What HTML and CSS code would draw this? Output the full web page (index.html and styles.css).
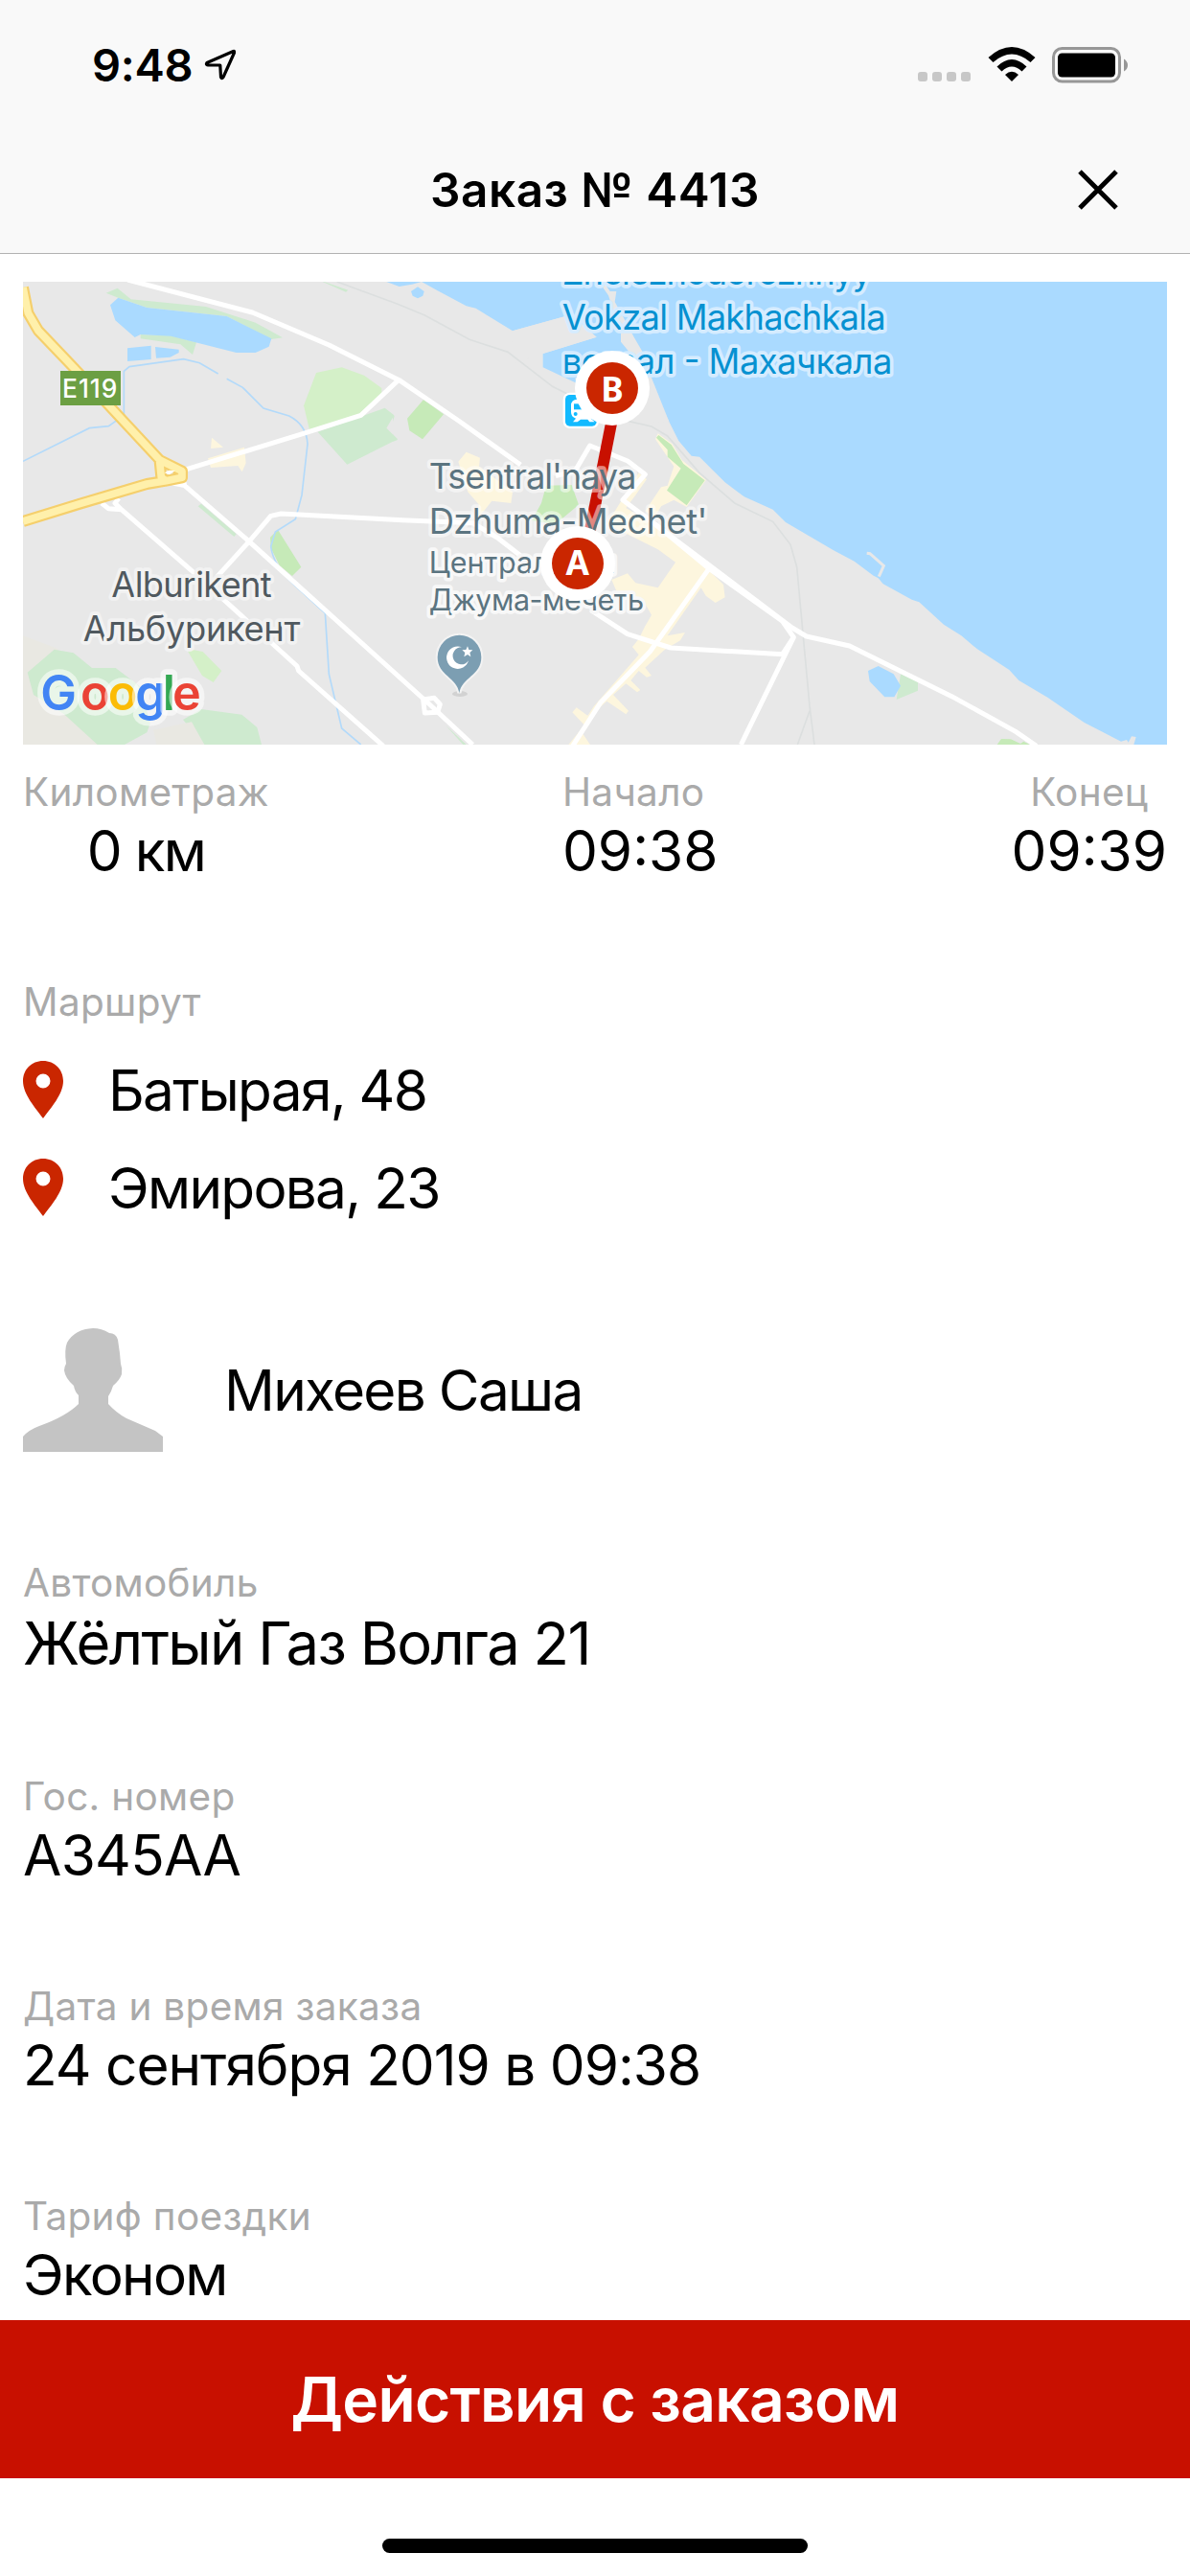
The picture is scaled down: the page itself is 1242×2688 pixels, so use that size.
FILE: index.html
```
<!DOCTYPE html>
<html lang="ru">
<head>
  <meta charset="UTF-8" />
  <title>Заказ № 4413</title>
  <link rel="stylesheet" href="styles.css">
</head>
<body>

<!-- Header -->
<header class="header">
  <div class="status-bar">
    <div class="status-left">
      <span class="time">9:48</span>
      <svg class="location" viewBox="0 0 33 33" width="33" height="33"><path d="M30.500 2.500 L3 14.500 Q1.500 16.500 4 16.800 L16.800 17 L17.500 29.500 Q18.500 32 20 29.500 L31.500 4 Q32 2 30.500 2.500 Z" fill="none" stroke="#000" stroke-width="3.200" stroke-linejoin="round"/></svg>
    </div>
    <div class="status-right">
      <div class="signal"><i></i><i></i><i></i><i></i></div>
      <svg class="wifi" viewBox="0 0 50 37" width="50" height="37">
        <path d="M0.500 11 Q25 -11 49.500 11 L44.500 16 Q25 -1 5.500 16 Z"/>
        <path d="M9.500 20.500 Q25 5.500 40.500 20.500 L35.500 25.500 Q25 15.500 14.500 25.500 Z"/>
        <path d="M18 29 Q25 22.500 32 29 L25 36 Z"/>
      </svg>
      <svg class="battery" viewBox="0 0 80 38" width="80" height="38">
        <rect x="1.500" y="1.500" width="69" height="34.500" rx="9" fill="none" stroke="#979797" stroke-width="3"/>
        <rect x="6" y="6.500" width="60" height="25" rx="4.500"/>
        <path d="M75 12.500 Q79 15 79 19 Q79 23 75 25.500 Z" fill="#979797"/>
      </svg>
    </div>
  </div>
  <div class="nav-bar">
    <h1>Заказ № 4413</h1>
    <svg class="close" viewBox="0 0 42 42" width="42" height="42"><path d="M2 2 L40 40 M40 2 L2 40" stroke="#000" stroke-width="5"/></svg>
  </div>
</header>

<main class="content">
  <!-- Map -->
  <svg class="map" viewBox="72 42 3582 1449" preserveAspectRatio="none">
    <rect x="72" y="42" width="3582" height="1449" fill="#e8e8e8"/>
    <path class="beige" d="M72 1150 L180 1190 L330 1491 H72 Z"/>

    <!-- sea -->
    <path class="water" d="M1210 42 L1250 57 L1290 50 L1320 42 L1370 70 L1460 118 L1490 125 L1605 196 L1770 150 L1868 215 L1700 267 L1700 310 L1800 357 L1900 400 L2060 400 L2080 450 L2125 540 L2165 587 L2190 590 L2270 670 L2330 715 L2420 755 L2460 795 L2610 883 L2675 917 L2735 962 L2750 970 L2765 988 L2855 1037 L2878 1045 L2955 1115 L3010 1150 L3060 1192 L3160 1257 L3190 1290 L3280 1343 L3395 1422 L3510 1481 L3528 1476 L3533 1484 L3543 1465 L3557 1467 L3550 1491 H3654 V42 Z"/>
    <path class="land" d="M1880 42 L1886 58 L1905 85 L1920 130 L1944 190 L1944 230 L1970 262 L1800 345 L1900 490 L2095 480 L2035 330 L2012 262 L1985 215 L1950 150 L1925 105 L1930 72 L1910 72 L1890 42 Z"/>
    <path class="land" d="M1605 196 L1790 145 L1868 215 L1700 267 L1600 300 Z"/>
    <path d="M2714 892 L2724 893 L2767 931 L2752 965" fill="none" stroke="#e8e8e8" stroke-width="9"/>
    <path class="water" d="M1287 72 L1308 58 L1328 72 L1324 86 L1308 94 L1292 86 Z"/>

    <!-- parks -->
    <path class="park" d="M332 77 L368 62 L410 97 L645 120 L800 170 L885 217 L850 222 L710 150 L460 123 L370 92 Z"/>
    <path class="park" d="M440 207 L535 210 L615 232 L603 270 L565 238 L440 220 Z"/>
    <path class="park" d="M1015 42 L1090 68 L1083 74 L1010 42 Z"/>
    <path class="park" d="M995 512 L1205 437 L1234 460 L1210 500 L1245 535 L1087 614 Z"/>
    <path class="park" d="M620 745 L630 737 L740 832 L733 840 Z"/>
    <path class="park" d="M86 1265 L170 1193 L230 1204 L288 1251 H362 L440 1310 L470 1425 L460 1453 L390 1491 H305 L200 1395 L105 1335 Z"/>
    <path class="park" d="M573 1413 L630 1380 L757 1397 L805 1437 L819 1491 H640 Z"/>
    <path class="park" d="M2820 1270 L2874 1295 V1322 L2807 1350 Z"/>
    <path class="park" d="M1230 460 L1235 462 L1230 480 Z M1230 520 L1245 537 L1230 542 Z M1395 1430 L1460 1491 H1450 Z"/>
    <path class="lawn" d="M990 327 L1070 310 L1140 335 L1195 375 V392 L1130 460 L970 510 L951 430 Z"/>
    <path class="lawn" d="M583 1190 L635 1200 L694 1260 L668 1296 L633 1275 Z"/>
    <path class="grass" d="M846 842 L870 818 L943 935 L915 963 L875 930 L848 875 Z"/>
    <path class="grass" d="M1275 470 L1326 411 L1389 457 L1323 535 L1282 508 Z"/>
    <path class="grass" d="M1710 680 L1790 678 L1812 740 L1740 800 L1665 790 L1695 735 Z"/>
    <path class="grass" d="M3122 1491 L3135 1473 L3165 1474 L3195 1488 L3205 1481 L3225 1491 Z"/>

    <!-- built-up areas -->
    <path class="beige" d="M480 1445 L600 1420 L640 1491 H490 Z"/>
    <path class="area" d="M663 530 L699 560 L660 564 Z M651 595 L765 560 L770 610 L758 637 L745 618 L660 624 Z"/>
    <path class="area" d="M1435 605 L1460 575 L1503 593 L1500 620 L1605 700 L1600 735 L1540 728 L1515 760 L1485 790 L1500 740 L1465 700 Z"/>
    <path class="area" d="M2000 640 L2025 660 L1990 710 L1960 750 L2040 800 L2170 895 L2220 945 L2265 990 L2270 1030 L2240 1047 L2210 1025 L2195 1000 L2090 1150 L2145 1140 L2130 1165 L2080 1195 L2020 1250 L2040 1275 L2025 1280 L2000 1260 L1975 1290 L2005 1320 L1995 1327 L1960 1300 L1920 1335 L1968 1385 L1960 1396 L1900 1355 L1850 1400 L1820 1450 L1848 1491 H1780 L1830 1430 L1792 1390 L1805 1375 L1840 1400 L1860 1370 L2000 1210 L1980 1185 L2000 1160 L2020 1120 L2040 1085 L2020 1050 L1930 1010 L1915 975 L1965 955 L1990 985 L2060 1000 L2115 920 L2060 880 L1900 800 Z"/>
    <path class="area" d="M2052 535 L2060 517 L2105 550 L2135 600 L2211 662 L2150 747 L2110 725 L2070 745 L2050 780 L2020 760 L2070 685 L2090 680 L2110 620 Z"/>
    <path class="grass" d="M2055 530 L2062 522 L2102 552 L2140 612 L2207 664 L2150 742 L2088 695 L2132 626 L2090 590 L2090 568 Z"/>

    <!-- lakes and rivers -->
    <path class="water" d="M345 115 L370 92 L460 123 L710 150 L850 220 L842 245 L800 264 H740 L535 212 L440 207 L422 216 L361 163 Z"/>
    <path class="water" d="M399 250 L473 242 V285 L399 291 Z M486 246 L560 254 V264 L533 278 L489 281 Z"/>
    <path class="water" d="M2718 1260 L2750 1245 L2798 1270 L2820 1307 L2800 1342 H2770 L2723 1293 Z"/>
    <path class="river" d="M72 604 L280 500 L340 494 L388 460 V322 L405 308 L575 284 L625 296 L683 330 M710 346 L760 373 L825 438 L905 462 Q960 490 963 550 L945 710 L925 785 L862 825 L848 870 Q855 930 920 990 L1018 1080 L1030 1270 L1070 1440 L1130 1491"/>

    <!-- railway -->
    <path class="rail" d="M1055 42 L1245 112 L1330 147 L1470 223 L1590 262 L1730 370 L1930 470 L2040 495 L2090 525 L2190 640 L2300 735 L2420 793 L2475 865 L2495 935 L2535 1370 L2550 1491 M2535 1385 L2497 1491"/>

    <!-- streets -->
    <path class="road" d="M400 36 L790 138 L1030 240 L1250 350 L1440 480 L1630 615 M565 635 L950 517 L1130 460 L1245 352"/>
    <path class="road" d="M540 672 L578 680 L780 855 L1345 1365 L1480 1491 M578 680 L570 645 M780 855 L848 775 L880 768 L1260 788 L1480 797 L1560 845 L1650 915"/>
    <path class="road" d="M318 735 L340 752 L380 755 L610 955 L930 1245 L935 1260 L1200 1495 M380 755 L360 735 L372 720 M780 855 L680 965"/>
    <path class="road" d="M1740 650 L1800 635 L1847 555 L1965 603 L2020 645 L1950 725 L2480 1125 L2525 1152 L2660 1182 L2980 1340 L3180 1450 L3245 1495 M1850 1070 L1965 1145 L2100 1188 L2450 1208 L2485 1155"/>
    <path class="road" d="M2050 800 L2220 940 L2450 1105 L2485 1155 L2320 1491 M2220 940 L2035 1200 L1880 1360 L1790 1500"/>
    <path class="road" d="M1325 1350 L1360 1345 L1378 1365 L1370 1390 L1330 1392 Z"/>

    <!-- highway -->
    <path class="highway-edge" d="M72 60 L88 140 L120 195 L230 310 L500 600 L570 635 L570 655 L520 665 L505 655 L500 605 M520 665 L460 675 L250 737 L72 792"/>
    <path class="highway" d="M72 60 L88 140 L120 195 L230 310 L500 600 L570 635 L570 655 L520 665 L505 655 L500 605 M520 665 L460 675 L250 737 L72 792"/>
    <path d="M515 640 L530 632 L548 634 L530 646 Z" fill="#fff"/>
    <rect x="189" y="321" width="189" height="108" fill="#6c9f43"/>
    <text class="shield" x="195" y="404" textLength="172">E119</text>

    <!-- captions -->
    <g class="caption town">
      <text x="349" y="1028" textLength="502">Alburikent</text>
      <text x="260" y="1167" textLength="680">Альбурикент</text>
    </g>
    <g class="caption station">
      <text x="1760" y="50" textLength="970">Zheleznodorozhnyy</text>
      <text x="1760" y="192" textLength="1014">Vokzal Makhachkala</text>
      <text x="1760" y="330" textLength="1034">вокзал - Махачкала</text>
    </g>

    <!-- route -->
    <path d="M1915 480 L1840 860" stroke="#c81000" stroke-width="36"/>
    <g class="caption mosque">
      <text x="1343" y="690" textLength="650">Tsentral'naya</text>
      <text x="1343" y="831" textLength="872">Dzhuma-Mechet'</text>
      <text class="small" x="1343" y="953" textLength="585">Центральная</text>
      <text class="small" x="1343" y="1070" textLength="673">Джума-мечеть</text>
    </g>
    <ellipse cx="1440" cy="1332" rx="24" ry="9" fill="#d2d2d2"/>
    <path d="M1438 1330 C1432 1280 1370 1275 1370 1217 A68 68 0 0 1 1507 1217 C1507 1275 1445 1280 1438 1330 Z" fill="#7c9eb2" stroke="#f3f3f3" stroke-width="12" paint-order="stroke"/>
    <path d="M1446 1186 A35 35 0 1 0 1467 1228 A27 27 0 1 1 1446 1186 Z" fill="#fff"/>
    <path d="M1464 1183 L1468 1194 L1480 1195 L1471 1203 L1474 1216 L1464 1209 L1453 1216 L1456 1203 L1447 1195 L1459 1194 Z" fill="#fff"/>

    <rect x="1770" y="396" width="98" height="98" rx="14" fill="#12baff" stroke="#fff" stroke-width="14" paint-order="stroke"/>
    <path d="M1808 410 H1860 V462 L1850 470 L1862 481 H1846 L1840 473 H1818 L1808 481 H1794 L1803 470 Q1788 465 1788 450 V430 Q1788 410 1808 410 Z" fill="#fff"/>
    <path d="M1797 424 H1845 V442 H1797 Z" fill="#12baff"/>
    <circle cx="1802" cy="456" r="6" fill="#12baff"/>

    <g class="pin">
      <circle cx="1917" cy="375" r="117" fill="#fff"/>
      <circle cx="1917" cy="375" r="81" fill="#ca2600"/>
      <text x="1917" y="417">B</text>
      <circle cx="1809" cy="924" r="117" fill="#fff"/>
      <circle cx="1809" cy="924" r="81" fill="#ca2600"/>
      <text x="1808" y="961">A</text>
    </g>

    <g class="google" aria-label="Google">
      <text x="127 252 338 424 509 540" y="1383"><tspan fill="#4285f4">G</tspan><tspan fill="#ea4335">o</tspan><tspan fill="#fbbc05">o</tspan><tspan fill="#4285f4">g</tspan><tspan fill="#34a853">l</tspan><tspan fill="#ea4335">e</tspan></text>
    </g>
  </svg>

  <!-- Trip summary -->
  <section class="summary">
    <div class="stat">
      <div class="label">Километраж</div>
      <div class="value">0 км</div>
    </div>
    <div class="stat">
      <div class="label start">Начало</div>
      <div class="value clock">09:38</div>
    </div>
    <div class="stat">
      <div class="label">Конец</div>
      <div class="value clock">09:39</div>
    </div>
  </section>

  <!-- Route -->
  <section class="route">
    <div class="label">Маршрут</div>
    <div class="stop">
      <svg viewBox="0 0 42 60" width="42" height="60"><path fill-rule="evenodd" d="M21 0 C9 0 0 9 0 21 C0 35 13 49 21 60 C29 49 42 35 42 21 C42 9 33 0 21 0 Z M21 13.500 A7.500 7.500 0 1 1 21 28.500 A7.500 7.500 0 1 1 21 13.500 Z" fill="#ca2600"/></svg>
      <span class="value">Батырая, 48</span>
    </div>
    <div class="stop">
      <svg viewBox="0 0 42 60" width="42" height="60"><path fill-rule="evenodd" d="M21 0 C9 0 0 9 0 21 C0 35 13 49 21 60 C29 49 42 35 42 21 C42 9 33 0 21 0 Z M21 13.500 A7.500 7.500 0 1 1 21 28.500 A7.500 7.500 0 1 1 21 13.500 Z" fill="#ca2600"/></svg>
      <span class="value">Эмирова, 23</span>
    </div>
  </section>

  <!-- Driver -->
  <section class="driver">
    <svg viewBox="0 0 146 129" width="146" height="129"><path d="M0 129 V113 Q6 106 17 102 Q45 92 58 79 V70 Q54 66 53 60 Q44 52 43 44 Q43 40 45 37 Q43 22 46 15 Q54 1 73 0 Q82 0 90 5 Q97 5 99 12 L101 26 L102 37 Q104 42 103 48 Q101 54 94 60 Q92 67 89 71 V79 Q97 88 108 94 L138 107 L146 113 V129 Z" fill="#c4c4c4"/></svg>
    <span class="value">Михеев Саша</span>
  </section>

  <!-- Order details -->
  <section class="details">
    <div class="field car">
      <div class="label">Автомобиль</div>
      <div class="value">Жёлтый Газ Волга 21</div>
    </div>
    <div class="field">
      <div class="label">Гос. номер</div>
      <div class="value plate">А345АА</div>
    </div>
    <div class="field">
      <div class="label">Дата и время заказа</div>
      <div class="value date">24 сентября 2019 в 09:38</div>
    </div>
    <div class="field">
      <div class="label">Тариф поездки</div>
      <div class="value">Эконом</div>
    </div>
  </section>
</main>

<button class="action">Действия с заказом</button>
<div class="home-area"><div class="home-indicator"></div></div>

</body>
</html>
```

FILE: styles.css
```
* { box-sizing: border-box; }
body {
  margin: 0;
  width: 1242px;
  height: 2688px;
  display: flex;
  flex-direction: column;
  background: #fff;
  color: #000;
  font-family: Inter, "Liberation Sans", sans-serif;
  overflow: hidden;
}
svg { display: block; flex: none; }

/* Header */
.header {
  height: 265px;
  flex: none;
  background: #f9f9f9;
  border-bottom: 1px solid #b2b2b2;
}
.status-bar {
  height: 132px;
  padding: 0 64px 0 96px;
  display: flex;
  justify-content: space-between;
}
.status-left {
  display: flex;
  align-items: flex-start;
  gap: 12px;
}
.time {
  margin-top: 38px;
  font-size: 47px;
  line-height: 60px;
  font-weight: 600;
  letter-spacing: -0.3px;
}
.location { margin-top: 51px; }
.status-right {
  display: flex;
  align-items: flex-start;
  padding-top: 49px;
}
.signal {
  display: flex;
  gap: 5px;
  margin: 26px 18px 0 0;
}
.signal i {
  width: 10px;
  height: 10px;
  border-radius: 3px;
  background: #c7c7c7;
}
.wifi { margin-right: 17px; }

.nav-bar {
  height: 132px;
  padding: 0 75px;
  display: grid;
  grid-template-columns: 1fr auto 1fr;
  align-items: center;
}
.nav-bar h1 {
  grid-column: 2;
  margin: 0;
  font-size: 49.5px;
  line-height: 60px;
  font-weight: 600;
  letter-spacing: 0.5px;
}
.close { justify-self: end; }

/* Content */
.content {
  height: 2156px;
  flex: none;
  padding: 29px 24px 0;
  overflow: hidden;
}
.label {
  font-size: 40.5px;
  line-height: 51px;
  letter-spacing: 0.3px;
  color: #aaa;
}
.value {
  font-size: 58.5px;
  line-height: 71px;
  letter-spacing: -1.7px;
  white-space: nowrap;
}
.value.clock { letter-spacing: 0; }
.value.plate { letter-spacing: -0.7px; }
.value.date { letter-spacing: -1px; }

/* Map */
.map {
  width: 1194px;
  height: 483px;
}
.map .water { fill: #aadaff; }
.map .land { fill: #e8e8e8; }
.map .beige { fill: #e9e8e2; }
.map .park { fill: #ceeacf; }
.map .lawn { fill: #d4f0c8; }
.map .grass { fill: #c6eab8; }
.map .area { fill: #fdf6de; }
.river { fill: none; stroke: #b3dafa; stroke-width: 5; }
.rail { fill: none; stroke: #dcdfdf; stroke-width: 5; }
.road { fill: none; stroke: #fff; stroke-width: 15; stroke-linejoin: round; }
.highway-edge { fill: none; stroke: #f5cf6c; stroke-width: 36; stroke-linejoin: round; }
.highway { fill: none; stroke: #fff0ab; stroke-width: 23; stroke-linejoin: round; }
.shield { font-size: 79px; font-weight: 500; fill: #fff; }
.caption {
  font-size: 109px;
  stroke-width: 22px;
  stroke-linejoin: round;
  paint-order: stroke;
}
.town { fill: #50595f; stroke: #f2f2f2; }
.station { fill: #0691d1; stroke: #d5ecff; }
.mosque { fill: #5b7480; stroke: rgba(255, 255, 255, 0.5); }
.caption .small { font-size: 92px; stroke: #f8f8f8; }
.pin text {
  font: bold 106px "Noto Sans", sans-serif;
  fill: #fff;
  text-anchor: middle;
}
.google text {
  font: 600 151px Inter, sans-serif;
  stroke: rgba(255, 255, 255, 0.55);
  stroke-width: 34px;
  stroke-linejoin: round;
  paint-order: stroke;
}

/* Trip summary */
.summary {
  display: flex;
  justify-content: space-between;
  margin-top: 24px;
}
.stat { text-align: center; }
.stat .start { text-align: left; }

/* Route */
.route { margin-top: 97px; }
.route .label { margin-bottom: 15px; }
.stop {
  height: 102px;
  display: flex;
  align-items: center;
  gap: 47px;
}

/* Driver */
.driver {
  display: flex;
  align-items: center;
  gap: 64px;
  margin: 96px 0 111px;
}

/* Order details */
.details {
  display: flex;
  flex-direction: column;
  gap: 97px;
}
.car .value {
  font-size: 61.5px;
  line-height: 75px;
}

/* Bottom */
.action {
  height: 165px;
  flex: none;
  padding: 0;
  border: 0;
  background: #c81000;
  color: #fff;
  font: 600 64px/78px Inter, "Liberation Sans", sans-serif;
  letter-spacing: -0.75px;
}
.home-area {
  flex: 1;
  padding-top: 63px;
}
.home-indicator {
  width: 444px;
  height: 15px;
  margin: 0 auto;
  border-radius: 8px;
  background: #000;
}
```
